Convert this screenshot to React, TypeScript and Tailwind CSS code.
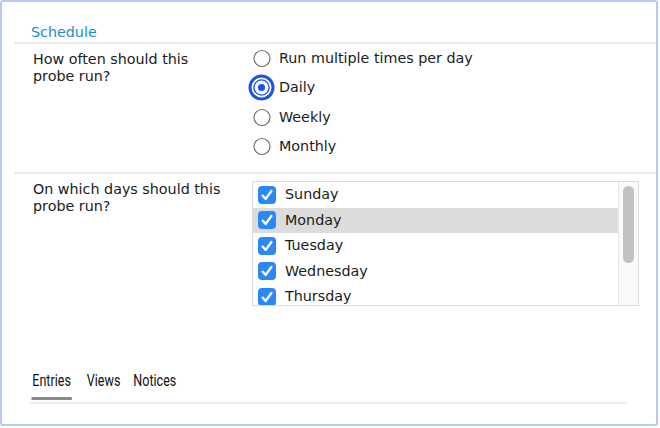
import { useState } from "react";

const frequencies = ["Run multiple times per day", "Daily", "Weekly", "Monthly"];
const days = ["Sunday", "Monday", "Tuesday", "Wednesday", "Thursday", "Friday", "Saturday"];

function Radio({ checked }: { checked: boolean }) {
  if (checked) {
    return (
      <svg width="27" height="27" viewBox="0 0 27 27">
        <circle cx="13.5" cy="13.5" r="11.5" fill="none" stroke="#1f53e4" strokeWidth="3" />
        <circle cx="13.5" cy="13.5" r="7.6" fill="#fff" stroke="#1f53e4" strokeWidth="1.4" />
        <circle cx="13.5" cy="13.5" r="3.6" fill="#1f53e4" />
      </svg>
    );
  }
  return (
    <svg width="27" height="27" viewBox="0 0 27 27">
      <circle cx="14" cy="13.5" r="8" fill="#fff" stroke="#6f6f6f" strokeWidth="1.2" />
    </svg>
  );
}

function Check() {
  return (
    <svg width="18" height="18" viewBox="0 0 18 18">
      <rect x="0" y="0" width="18" height="18" rx="4" fill="#2b88f8" />
      <path d="M4.6 9.6 L7.6 13 L13.4 5" fill="none" stroke="#fff" strokeWidth="2.3" strokeLinecap="round" strokeLinejoin="round" />
    </svg>
  );
}

const tabs = [
  { name: "Entries", gap: "ml-[2px]" },
  { name: "Views", gap: "ml-[19px]" },
  { name: "Notices", gap: "ml-[15px]" },
];

export default function App() {
  const [freq, setFreq] = useState("Daily");
  const [tab, setTab] = useState("Entries");

  return (
    <div
      className="w-[658px] h-[426px] border-2 border-[#b9c8f5] rounded-[3px] bg-white pl-[12px] text-[14.3px] leading-[17px] text-[#1b1b1b]"
      style={{ fontFamily: '"DejaVu Sans", "Liberation Sans", sans-serif' }}
    >
      <div className="pt-[22px] pb-[1px] pl-[17px] border-b-2 border-[#e9e9e9] text-[#1d8dcf]">Schedule</div>

      <div className="grid grid-cols-[234px_1fr] border-b-2 border-[#e9e9e9] pb-[11px]">
        <div className="pl-[19px] pr-[24px] pt-[7px]">How often should this probe run?</div>
        <div className="flex flex-col">
          {frequencies.map((f) => (
            <div key={f} className="flex items-center h-[29.3px] cursor-default" onClick={() => setFreq(f)}>
              <Radio checked={freq === f} />
              <span className="ml-[4px]">{f}</span>
            </div>
          ))}
        </div>
      </div>

      <div className="grid grid-cols-[234px_1fr]">
        <div className="pl-[19px] pr-[24px] pt-[7px]">On which days should this probe run?</div>
        <div className="pt-[7px] pl-[4px]">
          <div className="flex w-[387px] h-[125px] border border-[#dcdcdc] overflow-hidden">
            <div className="flex-1 flex flex-col">
              {days.map((d) => (
                <div
                  key={d}
                  className={`flex items-center shrink-0 h-[25.5px] pl-[5px] ${d === "Monday" ? "bg-[#dcdcdc]" : ""}`}
                >
                  <Check />
                  <span className="ml-[9px]">{d}</span>
                </div>
              ))}
            </div>
            <div className="w-[20px] border-l border-[#e6e6e6] bg-[#fafafa] pt-[4px] pl-[4px]">
              <div className="w-[11px] h-[77px] rounded-full bg-[#c2c2c2]" />
            </div>
          </div>
        </div>
      </div>

      <div className="mt-[66px] ml-[16px] w-[597px] pb-[2px] border-b-2 border-[#eeeeee]">
        <div
          className="flex origin-left scale-x-[0.76] text-[16.5px] leading-[18px] text-[#111]"
          style={{ fontFamily: 'Roboto, "Liberation Sans", sans-serif' }}
        >
          {tabs.map((t) => (
            <div
              key={t.name}
              onClick={() => setTab(t.name)}
              className={`px-[1px] pb-[7px] border-b-[3px] cursor-default ${t.gap} ${tab === t.name ? "border-[#8a8a8a]" : "border-transparent"}`}
            >
              {t.name}
            </div>
          ))}
        </div>
      </div>
    </div>
  );
}
